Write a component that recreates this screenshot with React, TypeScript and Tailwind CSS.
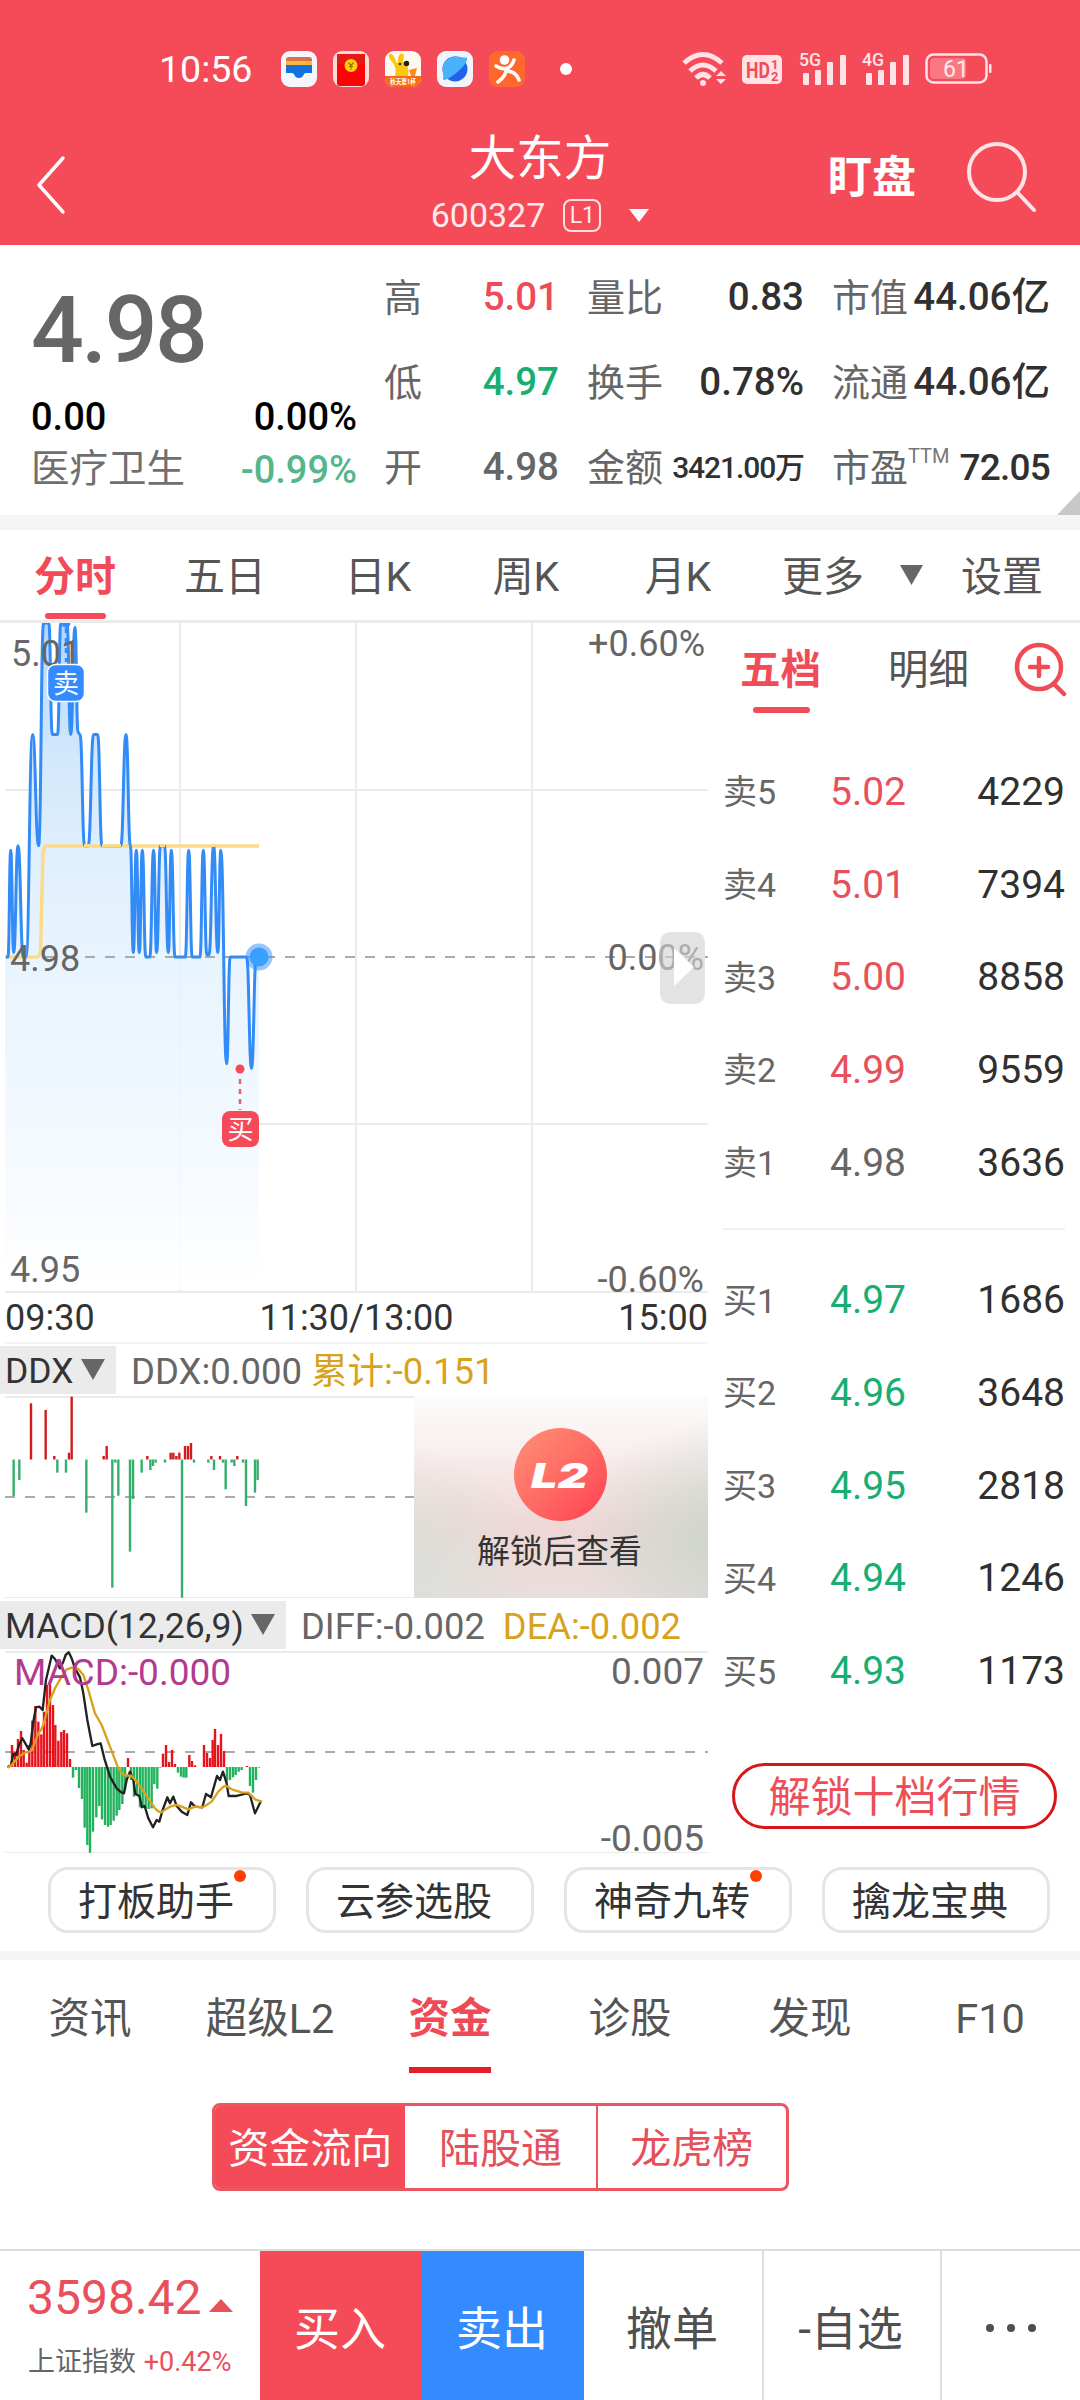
import React from 'react';

const RED = '#e8121b';
const GREEN = '#22b25c';

// [x, ticks from the previous close], one tick = 0.01
const PRICE_POINTS: [number, number][] = [
  [6, 0], [8, 0], [10.7, 0.96], [13.7, 0.04], [18, 1], [23.3, 0], [26, 0],
  [32.6, 2], [38.6, 1], [43.6, 3], [48.8, 3], [52.3, 2], [57.6, 2],
  [60.8, 3], [67, 3], [70.7, 2], [75, 2.96], [78, 2.02], [80, 2], [84.6, 1], [88.2, 1],
  [93.6, 2], [97.6, 2], [102, 1], [120.8, 1], [126, 2], [130.4, 1],
  [133.3, 0.04], [136.3, 0.96], [139.3, 0.04], [142.3, 0.96], [145.8, 0], [149.8, 0],
  [153.6, 0.96], [156.6, 0.04], [160.5, 1], [164.5, 1], [168.3, 0.04], [171.3, 0.96], [175, 0],
  [185.3, 0], [188.7, 0.96], [192.2, 0], [200, 0], [203.3, 0.96], [206.8, 0.02], [209, 0.02],
  [213.6, 1], [217.8, 0.04], [220.8, 0.96], [226.6, -0.96], [230.2, 0], [246.6, 0],
  [251.5, -1], [256.3, 0], [259, 0],
];

const priceY = (tick: number) => 957 - tick * 111.3;

const pricePath = PRICE_POINTS.reduce((d, [x, t], i) => {
  if (i === 0) return `M${x} ${priceY(t)}`;
  const [px, pt] = PRICE_POINTS[i - 1];
  const mid = (px + x) / 2;
  return `${d} C${mid} ${priceY(pt)} ${mid} ${priceY(t)} ${x} ${priceY(t)}`;
}, '');

// [x, bar end], both in thirds of a pixel
const DDX_BARS: [number, number][] = [
  [41, 618], [58, 570], [93, 340], [137, 360], [163, 498], [172, 548], [198, 548], [207, 488],
  [215, 320], [259, 668], [311, 498], [320, 468], [337, 893], [346, 518], [355, 617], [390, 785],
  [399, 627], [425, 548], [442, 498], [451, 540], [459, 528], [467, 518], [495, 518], [512, 488],
  [520, 488], [529, 498], [538, 488], [546, 923], [555, 468], [564, 468], [573, 459], [582, 518],
  [625, 518], [634, 498], [642, 540], [660, 498], [669, 518], [677, 598], [695, 518], [703, 528],
  [712, 498], [729, 518], [738, 648], [765, 608], [773, 570],
];

const MACD_BARS: [number, number][] = [
  [36, 465], [45, 485], [54, 447], [63, 423], [71, 480], [80, 518], [88, 465], [97, 392],
  [106, 348], [115, 395], [124, 433], [132, 365], [141, 285], [150, 285], [159, 345], [166, 405],
  [175, 452], [184, 426], [192, 420], [201, 430], [210, 507], [219, 563], [228, 540], [237, 594],
  [246, 627], [254, 713], [262, 765], [270, 788], [279, 725], [289, 682], [298, 648], [306, 688],
  [315, 705], [324, 710], [332, 705], [341, 692], [350, 677], [358, 660], [367, 642], [375, 600],
  [384, 504], [393, 570], [402, 620], [411, 612], [420, 652], [428, 648], [437, 655], [446, 657],
  [455, 655], [463, 582], [472, 596], [481, 533], [489, 491], [498, 465], [507, 516], [516, 480],
  [525, 522], [534, 548], [543, 560], [551, 563], [559, 563], [568, 495], [576, 513], [585, 526],
  [612, 465], [621, 489], [630, 504], [638, 450], [645, 417], [654, 465], [663, 432], [672, 483],
  [681, 575], [690, 570], [699, 562], [707, 555], [716, 545], [725, 540], [741, 528], [750, 588],
  [759, 608], [768, 570], [777, 533],
];

const DIFF_LINE =
  '25,530 33,525 40,492 48,495 57,465 67,445 76,460 86,478 92,460 100,395 108,352 118,350 128,360 138,270 155,197 165,207 180,235 190,215 197,195 206,187 215,205 225,235 240,262 250,310 262,390 277,468 290,463 302,460 313,505 330,560 350,595 362,606 372,610 380,570 390,545 400,570 406,612 418,618 426,652 434,648 445,685 459,712 470,690 478,695 488,660 502,622 510,640 520,620 530,648 545,665 562,675 573,637 585,650 607,652 618,612 633,622 651,558 660,570 669,545 680,580 686,618 710,618 740,610 750,615 765,670 782,635';
const DEA_LINE =
  '25,532 35,525 45,513 60,497 75,488 85,486 95,482 115,430 123,420 130,405 150,330 165,295 185,260 200,238 216,233 235,237 250,255 265,300 275,335 285,370 305,405 330,470 355,535 365,548 372,555 395,558 410,575 435,610 465,655 475,664 485,667 497,658 510,650 530,645 545,650 565,658 585,650 607,652 620,645 635,635 645,620 655,605 668,592 678,587 690,595 700,600 725,607 745,608 755,617 765,628 784,635';

const QUOTES = [
  {
    width: 'w-[175px]',
    rows: [
      { label: '高', value: '5.01', color: 'text-[#ee4b57]' },
      { label: '低', value: '4.97', color: 'text-[#18ae72]' },
      { label: '开', value: '4.98', color: 'text-[#666]' },
    ],
  },
  {
    width: 'w-[217px]',
    rows: [
      { label: '量比', value: '0.83', color: 'text-[#303030]' },
      { label: '换手', value: '0.78%', color: 'text-[#303030]' },
      { label: '金额', value: '3421.00万', color: 'text-[#303030] text-[30px] tracking-[-1.1px]' },
    ],
  },
  {
    width: 'w-[218px]',
    rows: [
      { label: '市值', value: '44.06亿', color: 'text-[#303030]' },
      { label: '流通', value: '44.06亿', color: 'text-[#303030]' },
      { label: '市盈', sup: 'TTM', value: '72.05', color: 'text-[#303030] text-[37px] tracking-[-0.8px]' },
    ],
  },
];

const SELLS = [
  ['卖5', '5.02', '4229'],
  ['卖4', '5.01', '7394'],
  ['卖3', '5.00', '8858'],
  ['卖2', '4.99', '9559'],
  ['卖1', '4.98', '3636'],
];

const BUYS = [
  ['买1', '4.97', '1686'],
  ['买2', '4.96', '3648'],
  ['买3', '4.95', '2818'],
  ['买4', '4.94', '1246'],
  ['买5', '4.93', '1173'],
];

const PERIODS = [
  { label: '五日', width: 'w-[150px]' },
  { label: '日K', width: 'w-[156px]' },
  { label: '周K', width: 'w-[140px]' },
  { label: '月K', width: 'w-[164px]' },
  { label: '更多', width: 'w-[126px]' },
];

const TOOLS = [
  { label: '打板助手', dot: true },
  { label: '云参选股', dot: false },
  { label: '神奇九转', dot: true },
  { label: '擒龙宝典', dot: false },
];

const Signal = ({ label }: { label: string }) => (
  <svg className="overflow-visible" width="48" height="34" viewBox="0 0 48 34" fill="#ffe3e6">
    <text x="0" y="14" fontSize="19" fontWeight="500" textLength="22" lengthAdjust="spacingAndGlyphs">{label}</text>
    <rect x="4" y="21" width="6" height="12" rx="1" />
    <rect x="16" y="18" width="6" height="15" rx="1" />
    <rect x="28" y="10" width="6" height="23" rx="1" />
    <rect x="41" y="3" width="6" height="30" rx="1" />
  </svg>
);

const StatusBar = () => (
  <div className="flex items-center h-[90px] pt-[48px] pl-[159px]">
    <span className="w-[122px] pt-[2px] text-[37.500px] leading-none text-white">10:56</span>
    <div className="flex gap-4">
      <svg width="36" height="36" viewBox="0 0 36 36">
        <rect width="36" height="36" rx="9" fill="#f4f6fb" />
        <path d="M5 9q0-3 3-3h20q3 0 3 3v4H5z" fill="#d8704a" />
        <rect x="5" y="10" width="26" height="5" fill="#ffb53c" />
        <path d="M5 14h26v8h-6c-3 0-2 5-7 5s-4-5-7-5H5z" fill="#1273e0" />
      </svg>
      <svg width="36" height="36" viewBox="0 0 36 36">
        <rect width="36" height="36" rx="9" fill="#fbdcd8" />
        <rect x="4" y="3" width="28" height="32" rx="3" fill="#f90505" />
        <path d="M4 3h28v9q-14 5-28 0z" fill="#e21a18" />
        <circle cx="18" cy="14.500" r="6.500" fill="#fdd20a" />
        <path d="M15.500 11.500l2.500 3 2.500-3M18 14.500v4M15.800 15.500h4.400" stroke="#a8650a" strokeWidth="1.200" fill="none" />
      </svg>
      <svg width="36" height="36" viewBox="0 0 36 36">
        <defs>
          <clipPath id="app-clip"><rect width="36" height="36" rx="9" /></clipPath>
        </defs>
        <g clipPath="url(#app-clip)">
          <rect width="36" height="36" fill="#fffaf0" />
          <path d="M4 4c2-3 5 0 7 7 1 1 2 1 2-1 0-5 2-9 5-7 2 1 0 6 0 8 6 3 6 9 5 14H10c1-5 1-9-2-13C6 9 3 7 4 4z" fill="#fcc80f" />
          <circle cx="15" cy="13" r="1.300" fill="#333" />
          <circle cx="21.500" cy="12.500" r="2.700" fill="#222" />
          <path d="M24 19l8-2-2 8h-4z" fill="#ff8a1e" />
          <rect y="25" width="36" height="11" fill="#f9690f" />
          <text x="5" y="33" fontSize="7" fontWeight="700" fill="#fff" textLength="26" lengthAdjust="spacingAndGlyphs">秋天第1杯</text>
        </g>
      </svg>
      <svg width="36" height="36" viewBox="0 0 36 36">
        <rect width="36" height="36" rx="9" fill="#f1f4fa" />
        <circle cx="18" cy="18" r="12.500" fill="#2163ec" />
        <path d="M6 22C4 12 12 5 20 5.600 24 6 28 7 30 6.500c1 3-3 9-9 14s-12 9-14 8.500 0-3-1-7z" fill="#48b3fb" />
      </svg>
      <svg width="36" height="36" viewBox="0 0 36 36">
        <rect width="36" height="36" rx="9" fill="#ff682c" />
        <circle cx="15.500" cy="9" r="4.800" fill="#fff" />
        <path d="M7 15q6 4 12 2 4-2 6-8M18 17q-1 8-9 14M17 20q10 0 13 9" stroke="#fff" strokeWidth="3.600" strokeLinecap="round" fill="none" />
      </svg>
    </div>
    <div className="w-3 h-3 ml-[35px] rounded-full bg-white" />
    <svg className="ml-[110px]" width="46" height="36" viewBox="0 0 46 36" fill="none" stroke="#ffe3e6" strokeWidth="5">
      <path d="M2 12Q21-5 40 12" />
      <path d="M8 20Q21 8 34 20" />
      <path d="M14 27Q21 20 28 27" />
      <circle cx="21" cy="32" r="3" fill="#ffe3e6" stroke="none" />
      <path d="M34 25l5-5 5 5zM34 28l5 5 5-5z" fill="#ffe3e6" stroke="none" />
    </svg>
    <svg className="ml-[14px]" width="41" height="30" viewBox="0 0 41 30">
      <rect width="40" height="29" y="1" rx="5" fill="#ffe3e6" />
      <g fill="#f54b58" fontWeight="700">
        <text x="4" y="24" fontSize="22" textLength="24" lengthAdjust="spacingAndGlyphs">HD</text>
        <text x="29" y="15" fontSize="13">1</text>
        <text x="29" y="27" fontSize="13">2</text>
      </g>
    </svg>
    <div className="flex gap-[15px] ml-[16px]">
      <Signal label="5G" />
      <Signal label="4G" />
    </div>
    <svg className="ml-[15px]" width="68" height="32" viewBox="0 0 68 32">
      <rect x="1.500" y="1.500" width="60" height="28" rx="7" fill="none" stroke="#ffe3e6" strokeWidth="2.500" />
      <rect x="5" y="5" width="36" height="21" rx="4" fill="#fa7783" />
      <rect x="64" y="11" width="2.500" height="9" rx="1" fill="#ffe3e6" />
      <text x="31" y="24" fontSize="23" textAnchor="middle" fill="#ffe9eb">61</text>
    </svg>
  </div>
);

const Header = () => (
  <header className="h-[245px] bg-[#f54b58] text-white">
    <StatusBar />
    <div className="flex h-[155px]">
      <svg className="mt-[65px] ml-[35px]" width="36" height="60" viewBox="0 0 36 60" fill="none" stroke="#fff" strokeWidth="3.500" strokeLinecap="round" strokeLinejoin="round">
        <path d="M28 3L4 30l24 27" />
      </svg>
      <div className="flex flex-col items-center w-[938px] px-[64px]">
        <h1 className="mt-[46px] text-[47.500px] leading-[46px]">大东方</h1>
        <div className="flex items-center h-[34px] mt-[16px] text-[34px] leading-none text-[#ffe9eb]">
          600327
          <span className="flex items-center justify-center w-[38px] h-[33px] ml-[18px] border-2 border-[#ffe0e3] rounded-lg text-[23px]">L1</span>
          <svg className="ml-[28px]" width="20" height="13" viewBox="0 0 20 13"><path d="M0 0h20L10 13z" fill="#fff" /></svg>
        </div>
      </div>
      <div className="relative w-0">
        <span className="absolute top-[66px] -left-[181px] text-[44px] leading-none font-bold whitespace-nowrap">盯盘</span>
        <svg className="absolute top-[50px] -left-[43px]" width="72" height="76" viewBox="0 0 72 76" fill="none" stroke="#ffe3e6" strokeWidth="4" strokeLinecap="round">
          <circle cx="31" cy="32" r="28" />
          <path d="M51 52l17 18" />
        </svg>
      </div>
    </div>
  </header>
);

const QuoteSummary = () => (
  <section className="relative flex h-[270px] pl-[31px]">
    <div className="w-[326px] pt-[29px] leading-none font-medium">
      <div className="flex items-center h-[112px] text-[93px] tracking-[-2.500px] text-[#666]">4.98</div>
      <div className="flex items-center justify-between h-[61px] text-[38px] text-black">
        <span>0.00</span>
        <span>0.00%</span>
      </div>
      <div className="flex items-center justify-between h-[45px] text-[38px]">
        <span className="font-normal text-[38.500px] text-[#6f6f6f]">医疗卫生</span>
        <span className="text-[#56b68b]">-0.99%</span>
      </div>
    </div>
    <div className="flex gap-[28px] pt-[10px] pl-[27px]">
      {QUOTES.map((col, i) => (
        <div key={i} className={col.width}>
          {col.rows.map((row) => (
            <div key={row.label} className="flex items-center justify-between h-[85px] text-[38.500px] leading-none whitespace-nowrap">
              <span className="flex text-[38px] text-[#666]">
                {row.label}
                {row.sup && <span className="-mt-[3px] text-[20px] text-[#777]">{row.sup}</span>}
              </span>
              <span className={`font-medium ${row.color}`}>{row.value}</span>
            </div>
          ))}
        </div>
      ))}
    </div>
    <svg className="absolute right-0 bottom-0" width="23" height="24" viewBox="0 0 23 24"><path d="M23 0v24H0z" fill="#c8c8c8" /></svg>
  </section>
);

const PeriodTabs = () => (
  <nav className="flex h-[93px] border-b-[3px] border-[#ebebeb] text-[41px] leading-[95px] text-center text-[#555]">
    <div className="relative w-[150px] font-bold text-[#f04b57]">
      分时
      <div className="absolute left-[45px] bottom-[1px] w-[61px] h-[6px] rounded-full bg-[#f54b58]" />
    </div>
    {PERIODS.map((p) => (
      <div key={p.label} className={p.width}>{p.label}</div>
    ))}
    <div className="flex items-center justify-center w-[50px]">
      <svg width="23" height="20" viewBox="0 0 23 20"><path d="M0 0h23L11.500 20z" fill="#666" /></svg>
    </div>
    <div className="w-[132px]">设置</div>
  </nav>
);

const PriceChart = () => (
  <svg className="block" width="708" height="721" viewBox="0 623 708 721" fontSize="36">
    <defs>
      <linearGradient id="price-fill" x1="0" y1="623" x2="0" y2="1290" gradientUnits="userSpaceOnUse">
        <stop offset="0" stopColor="#a9d2fa" stopOpacity="0.9" />
        <stop offset="0.2" stopColor="#cde5fb" stopOpacity="0.9" />
        <stop offset="0.4" stopColor="#e0f0fd" stopOpacity="0.9" />
        <stop offset="0.75" stopColor="#f1f8ff" stopOpacity="0.9" />
        <stop offset="1" stopColor="#fff" stopOpacity="0.9" />
      </linearGradient>
    </defs>
    <path d="M5 790H708M5 1124H708M5 1292H708M180 623V1292M356 623V1292M532 623V1292" stroke="#ebebeb" strokeWidth="2" />
    <path d="M5 1343H708" stroke="#ebebeb" />
    <path d={`${pricePath} V1290 H5 V957 Z`} fill="url(#price-fill)" />
    <path d="M5 957H708" stroke="#aaa" strokeWidth="2" strokeDasharray="10 10" />
    <path d="M5 957H37Q40 957 40.500 950L43 855Q43.500 846 46 846H259" fill="none" stroke="#fbdb8a" strokeWidth="3.500" />
    <path d={pricePath} fill="none" stroke="#338bf7" strokeWidth="3" strokeLinejoin="round" />
    <path d="M84 845.500H90M102 845.500H121M160 845.500H165M212 845.500H215" stroke="#fbdb8a" strokeWidth="3" />

    <g fill="#666">
      <text x="11" y="666">5.01</text>
      <text x="10" y="971">4.98</text>
      <text x="10" y="1282">4.95</text>
      <text x="705" y="656" textAnchor="end">+0.60%</text>
      <text x="704" y="970" textAnchor="end">0.00%</text>
      <text x="704" y="1292" textAnchor="end">-0.60%</text>
    </g>

    <circle cx="66" cy="623" r="4.500" fill="#338bff" />
    <path d="M66 628V662" stroke="#338bff" strokeWidth="2.500" strokeDasharray="5 5" />
    <rect x="47.500" y="664.500" width="37" height="37" rx="8" fill="#338bff" stroke="#fff" strokeWidth="1.500" />
    <text x="66" y="693" fontSize="26" fill="#fff" textAnchor="middle">卖</text>

    <circle cx="240" cy="1069" r="4.500" fill="#f54b58" />
    <path d="M240 1079V1110" stroke="#e0626c" strokeWidth="2.500" strokeDasharray="5 5" />
    <rect x="222" y="1111" width="37" height="36" rx="8" fill="#f54b58" />
    <text x="240.500" y="1139" fontSize="26" fill="#fff" textAnchor="middle">买</text>

    <circle cx="259" cy="957" r="13.500" fill="#338bff" fillOpacity="0.5" />
    <circle cx="259" cy="957" r="9.500" fill="#38a0ff" />

    <rect x="660" y="932" width="45" height="72" rx="10" fill="#d4d4d4" fillOpacity="0.65" />
    <path d="M674 948L694 967L674 986z" fill="#fff" />

    <g fill="#333">
      <text x="5" y="1330">09:30</text>
      <text x="356.500" y="1330" textAnchor="middle">11:30/13:00</text>
      <text x="708" y="1330" textAnchor="end">15:00</text>
    </g>
  </svg>
);

const Chip = ({ label, width }: { label: string; width: string }) => (
  <div className={`flex items-center h-12 pt-[4px] pl-[5px] bg-[#ebebeb] text-[35.500px] text-[#333] ${width}`}>
    {label}
    <svg className="ml-auto mr-[11px] -mt-[6px]" width="24" height="21" viewBox="0 0 24 21"><path d="M0 0h24L12 21z" fill="#666" /></svg>
  </div>
);

const DdxPanel = () => (
  <>
    <div className="flex items-center h-[52px] text-[36.500px] leading-none whitespace-nowrap">
      <Chip label="DDX" width="w-[116px]" />
      <span className="pt-[4px] ml-[15px] text-[#666]">DDX:0.000</span>
      <span className="pt-[4px] ml-[9px] text-[#d9a21b]">累计:-0.151</span>
    </div>
    <div className="relative h-[203px]">
      <svg className="block" width="708" height="203" viewBox="0 1396 708 203">
        <path d="M5 1397H708" stroke="#ebebeb" strokeWidth="2" />
        <path d="M5 1597.500H708" stroke="#ebebeb" />
        <path d="M5 1497H708" stroke="#aaa" strokeWidth="2" strokeDasharray="10 10" />
        {DDX_BARS.map(([x, v]) => (
          <rect
            key={x}
            x={x / 3 - 1.2}
            y={Math.min(1459.5, 1290 + v / 3)}
            width="2.400"
            height={Math.abs(v / 3 - 169.5)}
            fill={v < 508 ? '#d01c1c' : '#35b06c'}
          />
        ))}
      </svg>
      <div className="absolute top-0 right-0 flex flex-col items-center w-[294px] h-[202px] pt-[32px] bg-[radial-gradient(ellipse_50%_60%_at_105%_72%,#ccd6cd,transparent),radial-gradient(ellipse_45%_60%_at_-5%_85%,#d9dfd9,transparent),linear-gradient(to_bottom,#fdfcfc,#f8f0ef_25%,#eed7d6_65%,#eadedc)]">
        <div className="flex items-center justify-center w-[93px] h-[93px] rounded-full bg-linear-to-br from-[#ff9076] to-[#ff3a52] mr-[2px]">
          <svg width="62" height="30" viewBox="0 0 62 30">
            <text x="2" y="28" fontFamily="Inter" fontSize="34" fontWeight="900" fontStyle="italic" fill="#fff" textLength="57" lengthAdjust="spacingAndGlyphs">L2</text>
          </svg>
        </div>
        <span className="mt-[14px] mr-[3px] text-[33px] leading-none text-[#333]">解锁后查看</span>
      </div>
    </div>
  </>
);

const MacdPanel = () => (
  <>
    <div className="flex items-center h-[52px] text-[36.300px] leading-none whitespace-nowrap">
      <Chip label="MACD(12,26,9)" width="w-[286px]" />
      <span className="pt-[4px] ml-[15px] text-[#666]">DIFF:-0.002</span>
      <span className="pt-[4px] ml-[18px] text-[#d9a21b]">DEA:-0.002</span>
    </div>
    <svg className="block" width="708" height="204" viewBox="0 1651 708 204" fontSize="37">
      <path d="M5 1652H708" stroke="#ebebeb" strokeWidth="2" />
      <path d="M5 1852.500H708" stroke="#ebebeb" />
      <path d="M5 1752H708" stroke="#aaa" strokeWidth="2" strokeDasharray="10 10" />
      {MACD_BARS.map(([x, v]) => (
        <rect
          key={x}
          x={x / 3 - 1.2}
          y={Math.min(1767, 1590 + v / 3)}
          width="2.400"
          height={Math.abs(v / 3 - 177)}
          fill={v < 531 ? RED : GREEN}
        />
      ))}
      <g transform="translate(0 1590) scale(0.3333)" fill="none" strokeWidth="7" strokeLinejoin="round" strokeLinecap="round">
        <polyline points={DIFF_LINE} stroke="#222" />
        <polyline points={DEA_LINE} stroke="#d9a21b" />
      </g>
      <text x="14" y="1685" fill="#b23b8f">MACD:-0.000</text>
      <text x="704" y="1684" textAnchor="end" fill="#666">0.007</text>
      <text x="704" y="1851" textAnchor="end" fill="#666">-0.005</text>
    </svg>
  </>
);

const OrderRow = ({ row, color }: { row: string[]; color: string }) => (
  <div className="flex items-center h-[92.700px] text-[39px] leading-none">
    <span className="w-[107px] text-[34px] text-[#666]">{row[0]}</span>
    <span className={color}>{row[1]}</span>
    <span className="ml-auto text-[#303030]">{row[2]}</span>
  </div>
);

const OrderBook = () => (
  <aside className="w-[372px] pl-[15px] pr-[15px]">
    <div className="flex items-center h-[94px] text-[40.500px] leading-none whitespace-nowrap">
      <div className="relative ml-[17px] font-bold text-[#f04b57]">
        五档
        <div className="absolute left-[13px] -bottom-[23px] w-[57px] h-[6px] rounded-full bg-[#f04b57]" />
      </div>
      <span className="ml-[67px] text-[#555]">明细</span>
      <svg className="ml-[42px] shrink-0" width="56" height="58" viewBox="0 0 56 58" fill="none" stroke="#ee4b57" strokeWidth="4.500" strokeLinecap="round">
        <circle cx="28" cy="26" r="22" />
        <path d="M19 26h18M28 17v18M43 43l10 10" />
      </svg>
    </div>
    <div className="pt-[29px]">
      {SELLS.map((row, i) => (
        <OrderRow key={row[0]} row={row} color={i === 4 ? 'text-[#666]' : 'text-[#e8505b]'} />
      ))}
    </div>
    <div className="h-[2px] mt-[19px] mb-[24px] bg-[#f0f0f0]" />
    {BUYS.map((row) => (
      <OrderRow key={row[0]} row={row} color="text-[#18ae72]" />
    ))}
    <button className="flex items-center justify-center w-[325px] h-[66px] mt-[45px] ml-[9px] pt-[5px] border-[3px] border-[#d81717] rounded-full text-[42px] leading-none text-[#ec4e5a]">
      解锁十档行情
    </button>
  </aside>
);

const Tools = () => (
  <div className="flex gap-[30px] h-[96px] pt-[12px] pl-[48px]">
    {TOOLS.map((t) => (
      <div key={t.label} className="relative flex items-center w-[228px] h-[66px] pt-[5px] pl-[27px] border-[3px] border-[#e6e4e4] rounded-[20px] text-[39px] leading-none text-[#333]">
        {t.label}
        {t.dot && <div className="absolute top-0 right-[27px] w-3 h-3 rounded-full bg-[#ff4000]" />}
      </div>
    ))}
  </div>
);

const InfoTabs = () => (
  <nav className="grid grid-cols-6 h-[114px] text-[41.500px] leading-[117px] text-center text-[#555]">
    <span>资讯</span>
    <span>超级L2</span>
    <span className="relative font-bold text-[#ee4b57]">
      资金
      <i className="absolute left-[49px] top-[107px] w-[82px] h-[6px] bg-[#e61e28]" />
    </span>
    <span>诊股</span>
    <span>发现</span>
    <span>F10</span>
  </nav>
);

const FundSwitch = () => (
  <div className="grid grid-cols-3 w-[577px] h-[88px] mt-[29px] ml-[212px] border-[3px] border-[#ec5661] rounded-lg overflow-hidden text-[41px] leading-[86px] text-center text-[#e4505b] whitespace-nowrap">
    <div className="bg-[#f54b58] text-white">资金流向</div>
    <div>陆股通</div>
    <div className="border-l-2 border-[#ec5661]">龙虎榜</div>
  </div>
);

const TradeBar = () => (
  <footer className="flex h-[151px] mt-[58px] border-t-2 border-[#ddd] text-[46px] leading-[157px] text-center text-[#505050]">
    <div className="w-[260px] pl-[27px] text-left leading-none">
      <div className="flex mt-[23px] text-[48px] text-[#e8505b]">
        3598.42
        <svg className="mt-[25px] ml-[7px]" width="24" height="13" viewBox="0 0 24 13"><path d="M12 0l12 13H0z" fill="#e8505b" /></svg>
      </div>
      <div className="mt-[27px] ml-[1px] text-[27px] text-[#666] whitespace-nowrap">
        上证指数 <span className="ml-[1px] text-[#e8505b]">+0.42%</span>
      </div>
    </div>
    <div className="w-[162px] pr-[2px] bg-[#f54b58] text-white">买入</div>
    <div className="w-[162px] pr-[2px] bg-[#338bff] text-white">卖出</div>
    <div className="w-[180px] pr-[2px] border-r-2 border-[#ddd]">撤单</div>
    <div className="w-[178px] pr-[3px] border-r-2 border-[#ddd]">-自选</div>
    <div className="flex items-center justify-center flex-1 gap-[13px] pt-[5px]">
      <i className="w-2 h-2 rounded-full bg-[#505050]" />
      <i className="w-2 h-2 rounded-full bg-[#505050]" />
      <i className="w-2 h-2 rounded-full bg-[#505050]" />
    </div>
  </footer>
);

export default function App() {
  return (
    <div className="w-[1080px] h-[2400px] overflow-hidden bg-white font-[Roboto,'Noto_Sans_CJK_SC',sans-serif]">
      <Header />
      <QuoteSummary />
      <div className="h-[15px] bg-[#f5f5f5]" />
      <PeriodTabs />
      <div className="flex h-[1232px]">
        <div className="w-[708px]">
          <PriceChart />
          <DdxPanel />
          <MacdPanel />
        </div>
        <OrderBook />
      </div>
      <Tools />
      <div className="h-[9px] bg-[#f5f5f5]" />
      <InfoTabs />
      <FundSwitch />
      <TradeBar />
    </div>
  );
}
